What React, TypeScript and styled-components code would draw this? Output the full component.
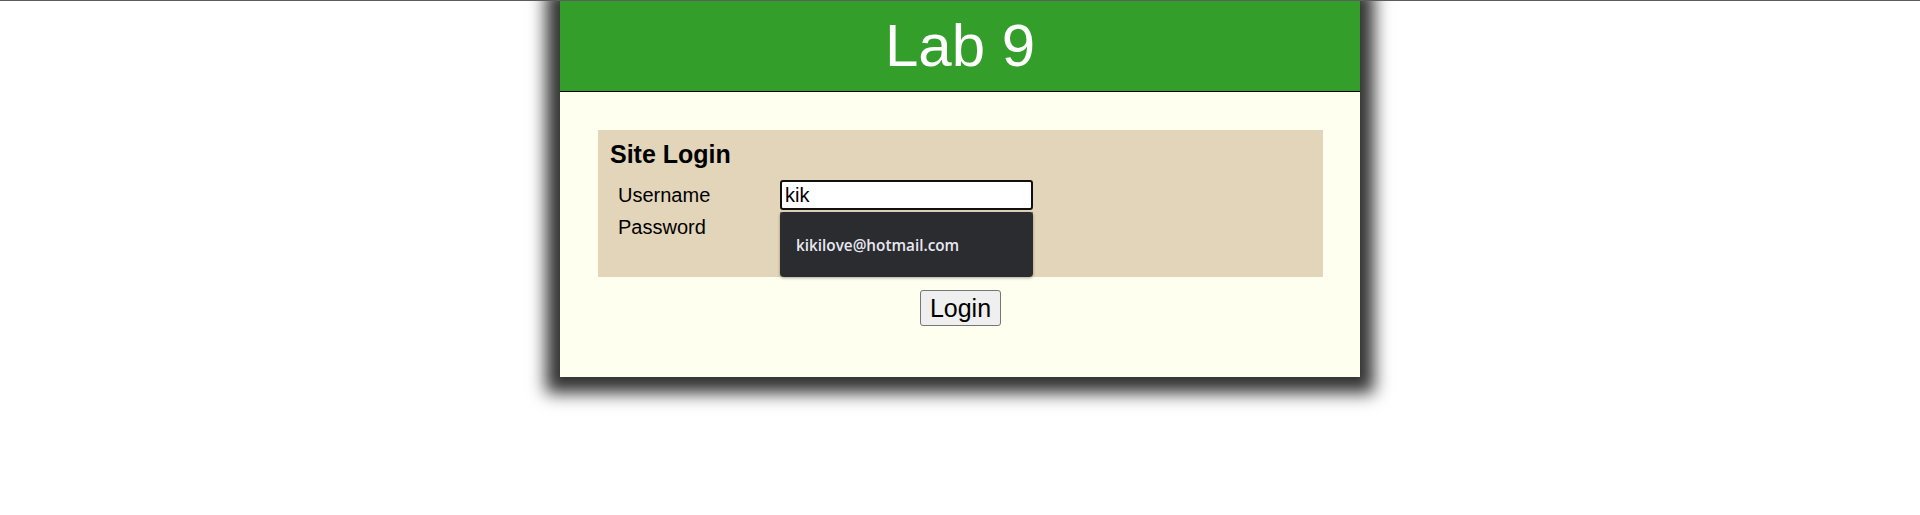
import { useState } from 'react';
import styled, { createGlobalStyle } from 'styled-components';

const GlobalStyle = createGlobalStyle`
  html, body {
    margin: 0;
    padding: 0;
    background: #ffffff;
  }
  body {
    border-top: 1px solid #5c5c5c;
    font-family: "Liberation Sans", Arial, sans-serif;
  }
`;

const Screen = styled.div`
  padding-bottom: 60px;
`;

const Page = styled.div`
  width: 800px;
  margin: 0 auto;
  background: #fffff0;
  box-shadow: 0 2px 16px 14px #333333;
`;

const Header = styled.header`
  background: #339e2a;
  border-bottom: 1px solid #000000;
  padding: 10px 0 11px;
`;

const Title = styled.h1`
  margin: 0;
  font-size: 60px;
  font-weight: normal;
  line-height: 69px;
  color: #ffffff;
  text-align: center;
`;

const Main = styled.main`
  padding: 38px 37px 51px 38px;
  display: flex;
  flex-direction: column;
  align-items: center;
`;

const LoginBox = styled.section`
  align-self: stretch;
  background: #e2d5b9;
  padding: 10px 12px 35px;
`;

const BoxTitle = styled.h2`
  margin: 0;
  font-size: 25px;
  font-weight: bold;
  line-height: 28px;
  color: #000000;
`;

const FieldGrid = styled.div`
  display: grid;
  grid-template-columns: 162px 253px;
  grid-auto-rows: 30px;
  row-gap: 2px;
  margin: 12px 0 0 8px;
`;

const Label = styled.label`
  padding-top: 4px;
  font-size: 20px;
  line-height: 23px;
  color: #000000;
`;

const FieldCell = styled.div`
  position: relative;
`;

const TextInput = styled.input<{ $focused?: boolean }>`
  box-sizing: border-box;
  width: 253px;
  height: 30px;
  margin: 0;
  padding: 0 3px;
  font-family: "Liberation Sans", Arial, sans-serif;
  font-size: 20px;
  color: #000000;
  background: #ffffff;
  border: ${({ $focused }) => ($focused ? '2px solid #101010' : '1px solid #767676')};
  border-radius: ${({ $focused }) => ($focused ? '3px' : '0')};
  outline: none;
`;

const Suggestions = styled.div`
  position: absolute;
  top: calc(100% + 2px);
  left: 0;
  width: 253px;
  height: 65px;
  box-sizing: border-box;
  display: flex;
  align-items: center;
  padding: 0 16px;
  background: #2b2c30;
  border-radius: 4px;
  box-shadow: 0 1px 3px rgba(0, 0, 0, 0.35);
  z-index: 2;
`;

const SuggestionText = styled.span`
  font-family: "Open Sans", "Noto Sans", sans-serif;
  font-size: 15.3px;
  font-weight: 600;
  color: #e8e8f0;
`;

const LoginButton = styled.button`
  margin-top: 13px;
  height: 36px;
  padding: 0 9px;
  font-family: "Liberation Sans", Arial, sans-serif;
  font-size: 25px;
  color: #000000;
  background: #efefef;
  border: 1px solid #767676;
  border-radius: 3px;
`;

export default function App() {
  const [username, setUsername] = useState('kik');
  const [password, setPassword] = useState('');

  return (
    <Screen>
      <GlobalStyle />
      <Page>
        <Header>
          <Title>Lab 9</Title>
        </Header>
        <Main>
          <LoginBox>
            <BoxTitle>Site Login</BoxTitle>
            <FieldGrid>
              <Label htmlFor="username">Username</Label>
              <FieldCell>
                <TextInput
                  id="username"
                  $focused
                  value={username}
                  onChange={(e) => setUsername(e.target.value)}
                />
                <Suggestions>
                  <SuggestionText>kikilove@hotmail.com</SuggestionText>
                </Suggestions>
              </FieldCell>
              <Label htmlFor="password">Password</Label>
              <FieldCell>
                <TextInput
                  id="password"
                  type="password"
                  value={password}
                  onChange={(e) => setPassword(e.target.value)}
                />
              </FieldCell>
            </FieldGrid>
          </LoginBox>
          <LoginButton type="button">Login</LoginButton>
        </Main>
      </Page>
    </Screen>
  );
}
